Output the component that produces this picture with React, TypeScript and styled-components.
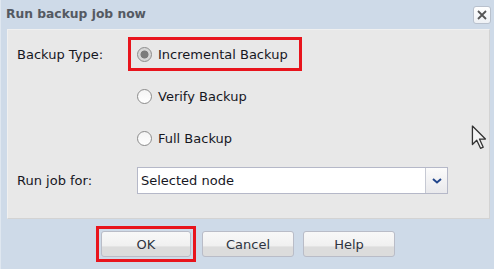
import React from "react";
import styled, { createGlobalStyle } from "styled-components";

const Global = createGlobalStyle`
  html, body { margin: 0; padding: 0; }
  body { width: 494px; height: 269px; overflow: hidden; background: #cedae8; }
  * { box-sizing: border-box; }
`;

const Dialog = styled.div`
  position: relative;
  width: 494px;
  height: 269px;
  background: #cedae8;
  border-left: 1px solid #dfe7f0;
  display: flex;
  flex-direction: column;
  font-family: "DejaVu Sans", Verdana, sans-serif;
  font-size: 13px;
  color: #16171f;
`;

const TitleBar = styled.div`
  height: 29px;
  display: flex;
  align-items: center;
  justify-content: space-between;
  padding: 0 3px 0 5px;
`;

const Title = styled.div`
  font-weight: bold;
  font-size: 12.3px;
  color: #545962;
  margin-top: -1px;
`;

const CloseButton = styled.div`
  width: 18px;
  height: 18px;
  margin-top: 1px;
  border: 1px solid #b9c1cd;
  border-radius: 3px;
  background: linear-gradient(#ffffff, #eef1f5);
  display: flex;
  align-items: center;
  justify-content: center;
`;

const Panel = styled.div`
  margin: 0 4px 0 6px;
  height: 190px;
  background: #e8e8e8;
  border: 1px solid #d3d3d3;
  border-top-color: #f0f0f0;
  border-left-color: #f0f0f0;
  padding: 7px 0 0 9px;
  display: grid;
  grid-template-columns: 111px 1fr;
  grid-auto-rows: min-content;
  row-gap: 12px;
`;

const Label = styled.div<{ $h: number }>`
  height: ${(p) => p.$h}px;
  display: flex;
  align-items: center;
`;

const Options = styled.div`
  display: flex;
  flex-direction: column;
  align-items: flex-start;
  gap: 8px;
`;

const Option = styled.div<{ $marked?: boolean }>`
  height: 34px;
  display: inline-flex;
  align-items: center;
  gap: 6px;
  padding: 0 11px 0 6px;
  border: 3px solid ${(p) => (p.$marked ? "#e8141c" : "transparent")};
`;

const Radio = styled.span<{ $checked?: boolean }>`
  width: 15px;
  height: 15px;
  border-radius: 50%;
  border: 1px solid #8c8c8c;
  background: ${(p) =>
    p.$checked
      ? "radial-gradient(circle, #7b7b7b 0 3.6px, #d6d6d6 4.4px)"
      : "linear-gradient(#f4f4f4, #ffffff)"};
  flex: none;
`;

const Select = styled.div`
  margin-left: 9px;
  width: 311px;
  height: 27px;
  border: 1px solid #b5b8c8;
  background: #fff;
  display: flex;
  align-items: stretch;
`;

const SelectText = styled.div`
  flex: 1;
  display: flex;
  align-items: center;
  padding-left: 3px;
`;

const DropButton = styled.div`
  width: 22px;
  border-left: 1px solid #c6c9d3;
  background: linear-gradient(#fbfbfb, #e9e9ec);
  display: flex;
  align-items: center;
  justify-content: center;
`;

const ButtonRow = styled.div`
  display: flex;
  align-items: flex-start;
  padding: 7px 0 0 95px;
`;

const Marked = styled.div`
  border: 3px solid #e8141c;
  padding: 2px;
`;

const Button = styled.div<{ $w: number; $ml?: number }>`
  width: ${(p) => p.$w}px;
  height: 26px;
  margin-left: ${(p) => p.$ml ?? 0}px;
  margin-top: ${(p) => (p.$ml ? 5 : 0)}px;
  border: 1px solid #b9bcc7;
  border-radius: 3px;
  background: linear-gradient(#f8f8f8 0%, #f0f0f0 58%, #dcdcdc 62%, #dcdcdc 100%);
  display: flex;
  align-items: center;
  justify-content: center;
  color: #2e3440;
`;

const Cursor = styled.svg`
  position: absolute;
  left: 470px;
  top: 125px;
`;

export default function App() {
  return (
    <>
      <Global />
      <Dialog>
        <TitleBar>
          <Title>Run backup job now</Title>
          <CloseButton>
            <svg width="10" height="10" viewBox="0 0 10 10">
              <path d="M1 1 L9 9 M9 1 L1 9" stroke="#555" strokeWidth="1.8" />
            </svg>
          </CloseButton>
        </TitleBar>
        <Panel>
          <Label $h={34}>Backup Type:</Label>
          <Options>
            <Option $marked>
              <Radio $checked />
              Incremental Backup
            </Option>
            <Option>
              <Radio />
              Verify Backup
            </Option>
            <Option>
              <Radio />
              Full Backup
            </Option>
          </Options>
          <Label $h={27}>Run job for:</Label>
          <Select>
            <SelectText>Selected node</SelectText>
            <DropButton>
              <svg width="10" height="6" viewBox="0 0 10 6">
                <path d="M1 1 L5 4.5 L9 1" stroke="#22468c" strokeWidth="2" fill="none" />
              </svg>
            </DropButton>
          </Select>
        </Panel>
        <ButtonRow>
          <Marked>
            <Button $w={90}>OK</Button>
          </Marked>
          <Button $w={92} $ml={6}>Cancel</Button>
          <Button $w={92} $ml={9}>Help</Button>
        </ButtonRow>
        <Cursor width="18" height="26" viewBox="0 0 16 24">
          <path
            d="M1 1 L1 18 L5 14 L8.5 21.5 L11 20.5 L7.5 13 L13 13 Z"
            fill="#f4f4f4"
            stroke="#333"
            strokeWidth="1.2"
            strokeLinejoin="round"
          />
        </Cursor>
      </Dialog>
    </>
  );
}
